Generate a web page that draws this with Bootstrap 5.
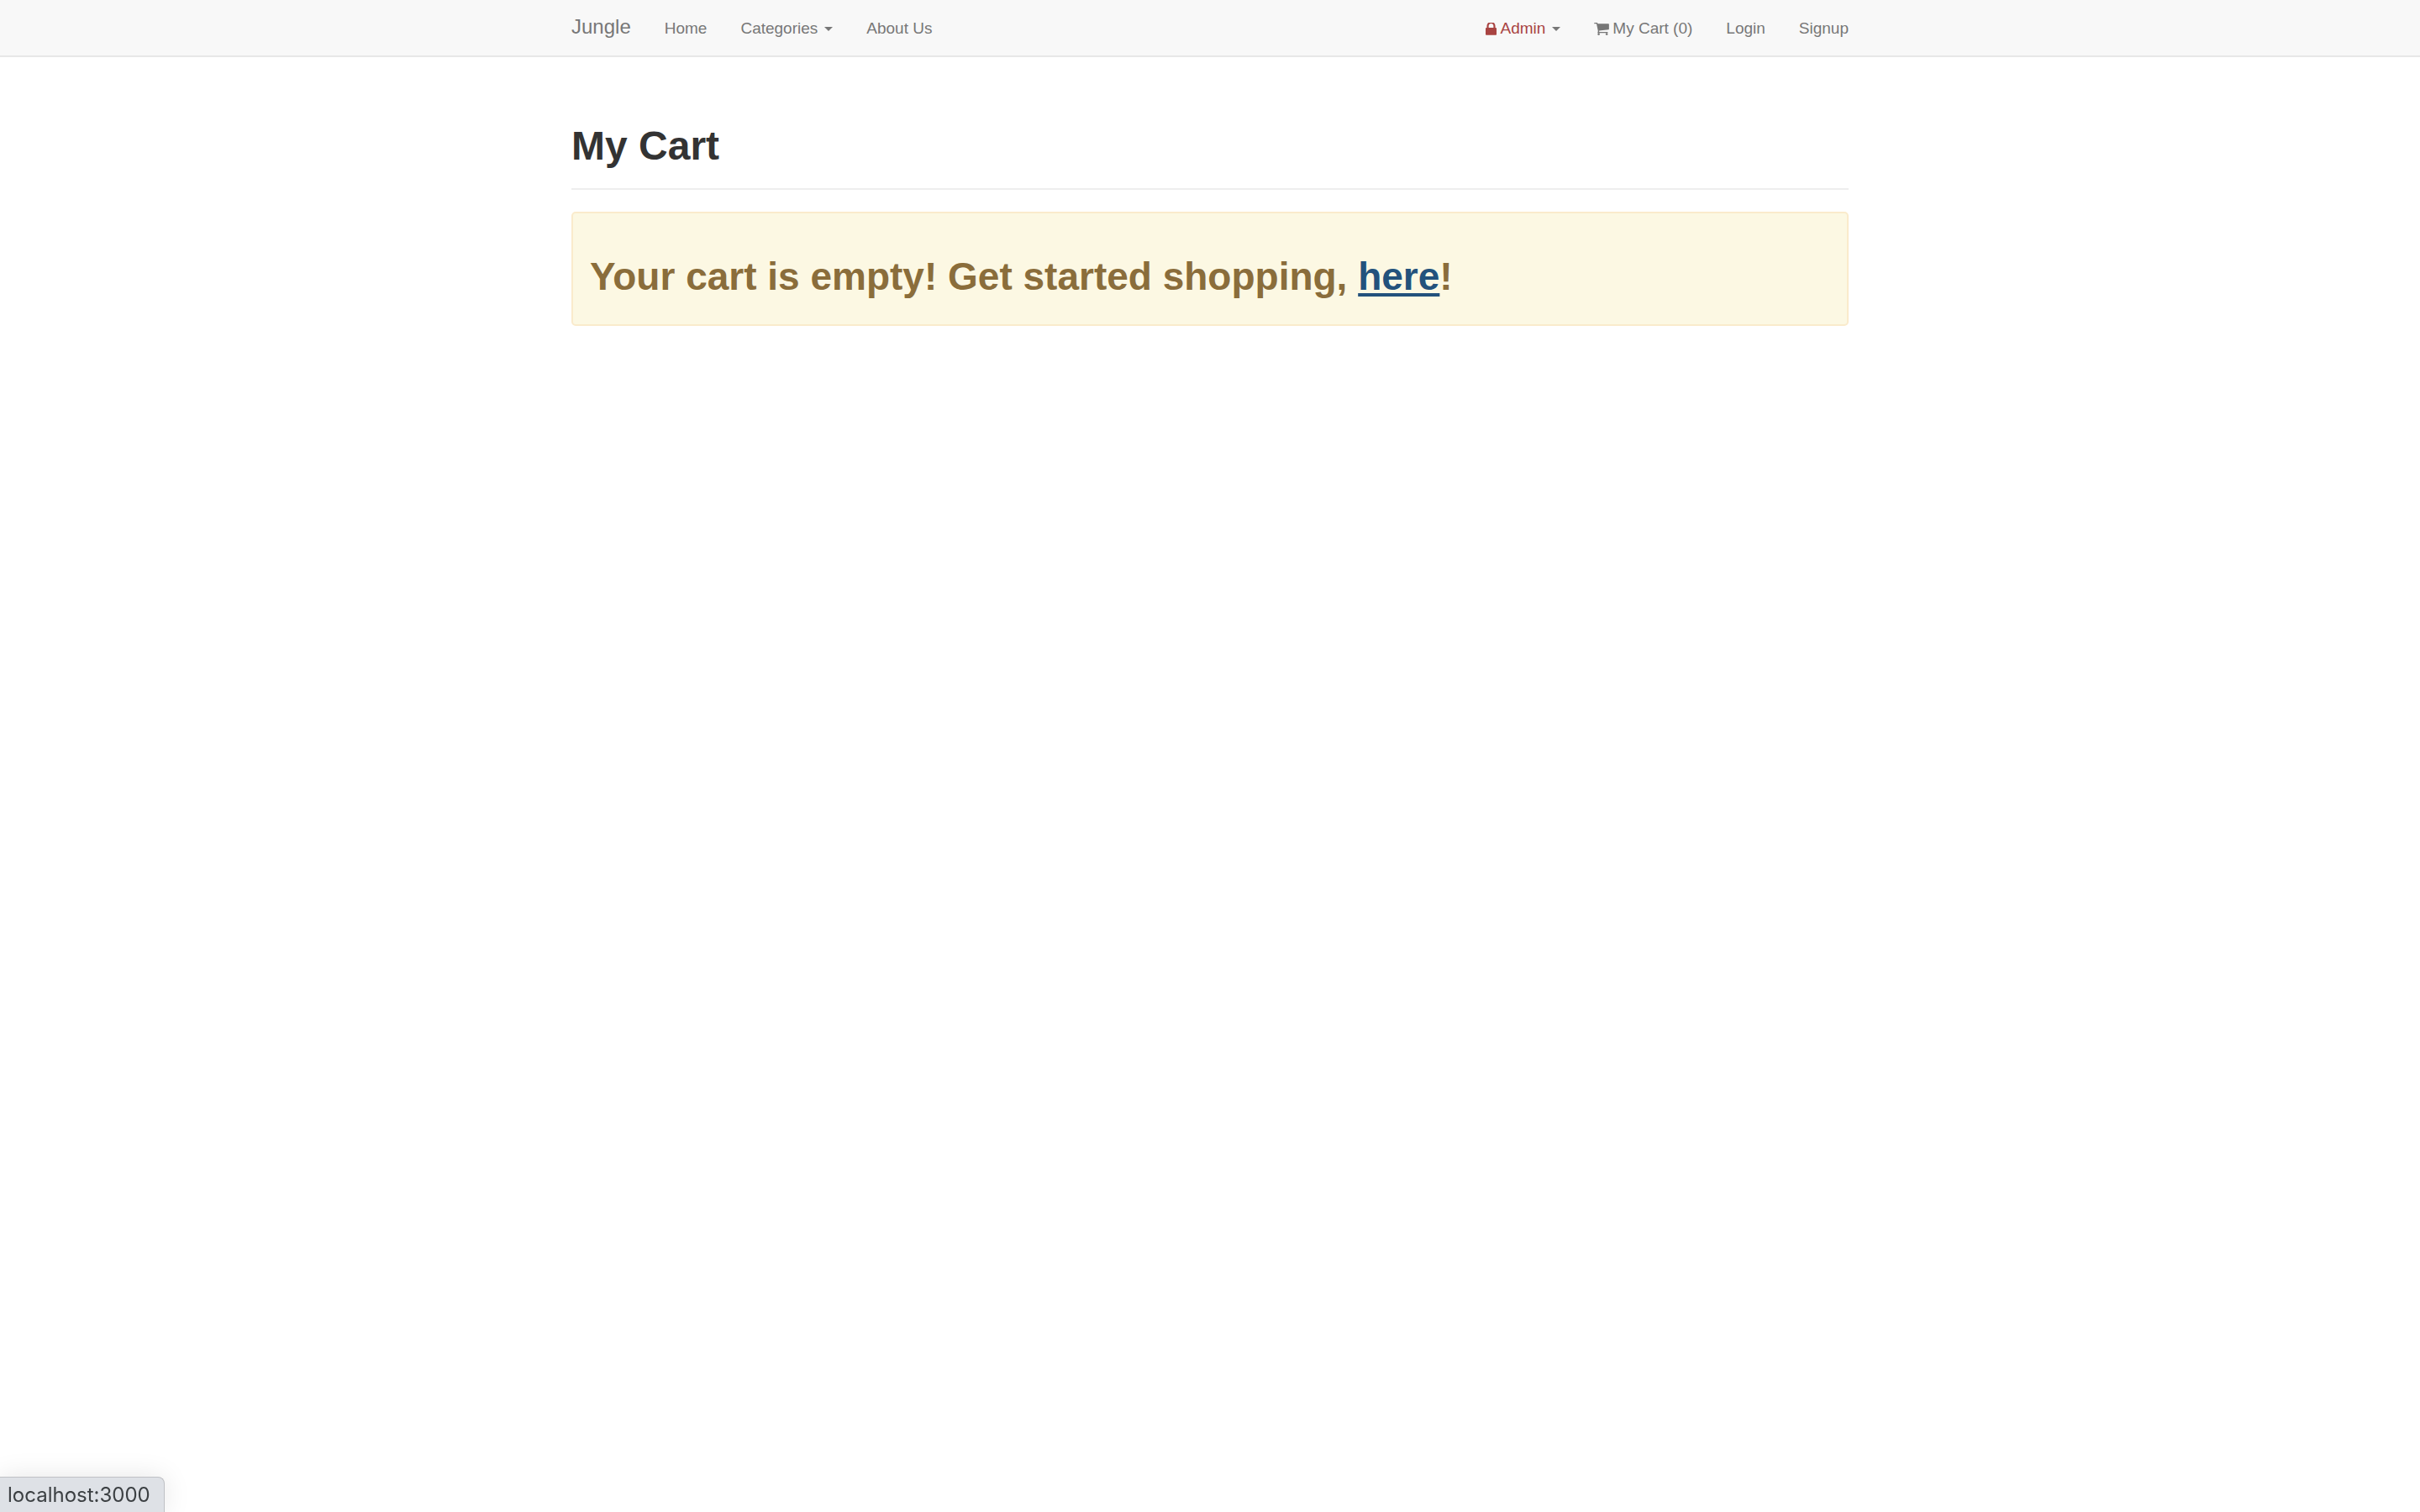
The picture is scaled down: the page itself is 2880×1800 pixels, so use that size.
<!DOCTYPE html>
<html lang="en">
<head>
<meta charset="utf-8">
<meta name="viewport" content="width=device-width, initial-scale=1">
<title>Jungle - My Cart</title>
<link href="https://cdn.jsdelivr.net/npm/bootstrap@5.3.0/dist/css/bootstrap.min.css" rel="stylesheet">
<style>
  body { font-family: "Liberation Sans", Arial, sans-serif; font-size: 19px; line-height: 26px; color: #333; background: #fff; }
  .site-width { max-width: 1560px; padding: 0 20px; }
  .site-nav { background: #f8f8f8; border-bottom: 2px solid #e7e7e7; padding: 0; }
  .site-nav .navbar-brand { font-size: 24px; line-height: 26px; padding: 19px 20px 21px 0; margin: 0; color: #777; }
  .site-nav .navbar-nav .nav-link { padding: 21px 20px 19px; color: #777; display: flex; align-items: center; }
  .site-nav .navbar-nav:last-child .nav-item:last-child .nav-link { padding-right: 0; }
  .site-nav .dropdown-toggle::after { margin-left: 8px; border-top: 5px solid #777; border-right: 5px solid transparent; border-left: 5px solid transparent; }
  .site-nav .nav-link svg { margin-right: 4px; fill: currentColor; }
  .site-nav .navbar-nav .admin-link { color: #a94442; }
  .page-title { margin-top: 79px; padding-bottom: 24px; margin-bottom: 26px; border-bottom: 2px solid #eee; }
  h1 { font-size: 48px; line-height: 53px; font-weight: 700; margin: 0; }
  .cart-alert { padding: 49px 20px 30px; border: 2px solid #faebcc; border-radius: 5px; background: #fcf8e3; color: #8a6d3b; }
  .cart-alert h1 { font-size: 46px; }
  .cart-alert a { color: #23527c; text-decoration-thickness: 4px; text-underline-offset: 4px; text-decoration-skip-ink: none; }
  .status-bubble { font-family: Inter, sans-serif; font-size: 24px; line-height: 41px; padding: 0 16px 0 9px; color: #3c4043; background: #dee1e6; border: 1px solid #bfc1c5; border-width: 1px 1px 0 0; border-top-right-radius: 8px; box-shadow: 0 0 32px rgba(0,0,0,.1); }
</style>
</head>
<body>
<nav class="navbar navbar-expand site-nav" aria-label="Main">
  <div class="container-fluid site-width">
    <a class="navbar-brand" href="#">Jungle</a>
    <ul class="navbar-nav">
      <li class="nav-item"><a class="nav-link" href="#">Home</a></li>
      <li class="nav-item dropdown"><button type="button" class="nav-link dropdown-toggle border-0 bg-transparent" data-bs-toggle="dropdown" aria-expanded="false">Categories</button></li>
      <li class="nav-item"><a class="nav-link" href="#">About Us</a></li>
    </ul>
    <ul class="navbar-nav ms-auto">
      <li class="nav-item dropdown"><button type="button" class="nav-link dropdown-toggle admin-link border-0 bg-transparent" data-bs-toggle="dropdown" aria-expanded="false"><svg width="13" height="15" viewBox="320 256 1152 1280" aria-hidden="true"><path d="M640 768h512v-192q0-106-75-181t-181-75-181 75-75 181v192zm832 96v576q0 40-28 68t-68 28h-960q-40 0-68-28t-28-68v-576q0-40 28-68t68-28h32v-192q0-184 132-316t316-132 316 132 132 316v192h32q40 0 68 28t28 68z"/></svg>Admin</button></li>
      <li class="nav-item"><a class="nav-link" href="#"><svg width="18" height="15" viewBox="64 256 1664 1408" aria-hidden="true"><path d="M704 1536q0 52-38 90t-90 38-90-38-38-90 38-90 90-38 90 38 38 90zm896 0q0 52-38 90t-90 38-90-38-38-90 38-90 90-38 90 38 38 90zm128-1088v512q0 24-16.500 42.500t-40.500 21.500l-1044 122q13 60 13 70 0 16-24 64h920q26 0 45 19t19 45-19 45-45 19h-1024q-26 0-45-19t-19-45q0-11 8-31.500t16-36 21.500-40 15.500-29.500l-177-823h-204q-26 0-45-19t-19-45 19-45 45-19h256q16 0 28.500 6.500t19.500 15.500 13 24.500 8 26 5.500 29.500 4.500 26h1201q26 0 45 19t19 45z"/></svg>My Cart (0)</a></li>
      <li class="nav-item"><a class="nav-link" href="#">Login</a></li>
      <li class="nav-item"><a class="nav-link" href="#">Signup</a></li>
    </ul>
  </div>
</nav>
<main class="container-fluid site-width">
  <header class="page-title"><h1>My Cart</h1></header>
  <div class="alert cart-alert" role="alert">
    <h1>Your cart is empty! Get started shopping, <a href="#">here</a>!</h1>
  </div>
</main>
<div class="status-bubble position-fixed bottom-0 start-0">localhost:3000</div>
<script src="https://cdn.jsdelivr.net/npm/bootstrap@5.3.0/dist/js/bootstrap.bundle.min.js"></script>
</body>
</html>
